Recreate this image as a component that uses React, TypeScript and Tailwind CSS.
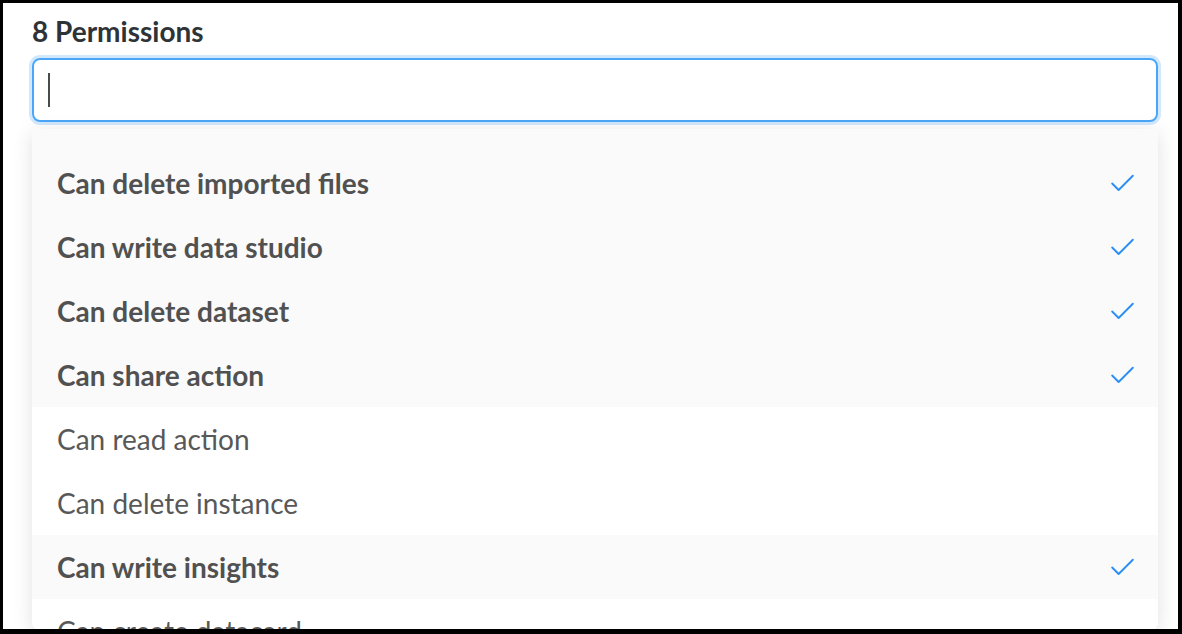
import { Check } from "lucide-react";

const items = [
  { label: "Can delete imported files", on: true },
  { label: "Can write data studio", on: true },
  { label: "Can delete dataset", on: true },
  { label: "Can share action", on: true },
  { label: "Can read action", on: false },
  { label: "Can delete instance", on: false },
  { label: "Can write insights", on: true },
  { label: "Can create datacard", on: false },
];

export default function App() {
  return (
    <div
      className="w-[1182px] h-[634px] overflow-hidden bg-white border-black border-l-[3px] border-t-[3px] border-r-[4px] border-b-[5px]"
      style={{ fontFamily: "Lato, 'Open Sans', sans-serif" }}
    >
      <div className="pl-[29px] pr-[20px] pt-[12px]">
        <h2 className="text-[28px] leading-[32px] font-bold text-[#2e3338]">8 Permissions</h2>

        <div className="mt-[11px] w-[1126px] h-[64px] rounded-[8px] border-2 border-[#4aa6f8] ring-[3px] ring-[#d2e8fd] flex items-center pl-[14px]">
          <div className="w-[2px] h-[34px] bg-[#4a4a4a]" />
        </div>

        <div className="mt-[7px] w-[1126px] h-[501px] overflow-hidden rounded-b-[8px] bg-white shadow-[0_4px_20px_rgba(0,0,0,0.12)]">
          <div className="h-[22px] bg-[#fafafa]" />
          {items.map((it) => (
            <div
              key={it.label}
              className={`h-[64px] flex items-center justify-between pl-[25px] pr-[20px] text-[28px] ${
                it.on ? "bg-[#fafafa] font-bold text-[#515151]" : "bg-white text-[#585858]"
              }`}
            >
              <span>{it.label}</span>
              {it.on && <Check className="w-[31px] h-[31px] text-[#2b90f3]" strokeWidth={1.5} />}
            </div>
          ))}
        </div>
      </div>
    </div>
  );
}
